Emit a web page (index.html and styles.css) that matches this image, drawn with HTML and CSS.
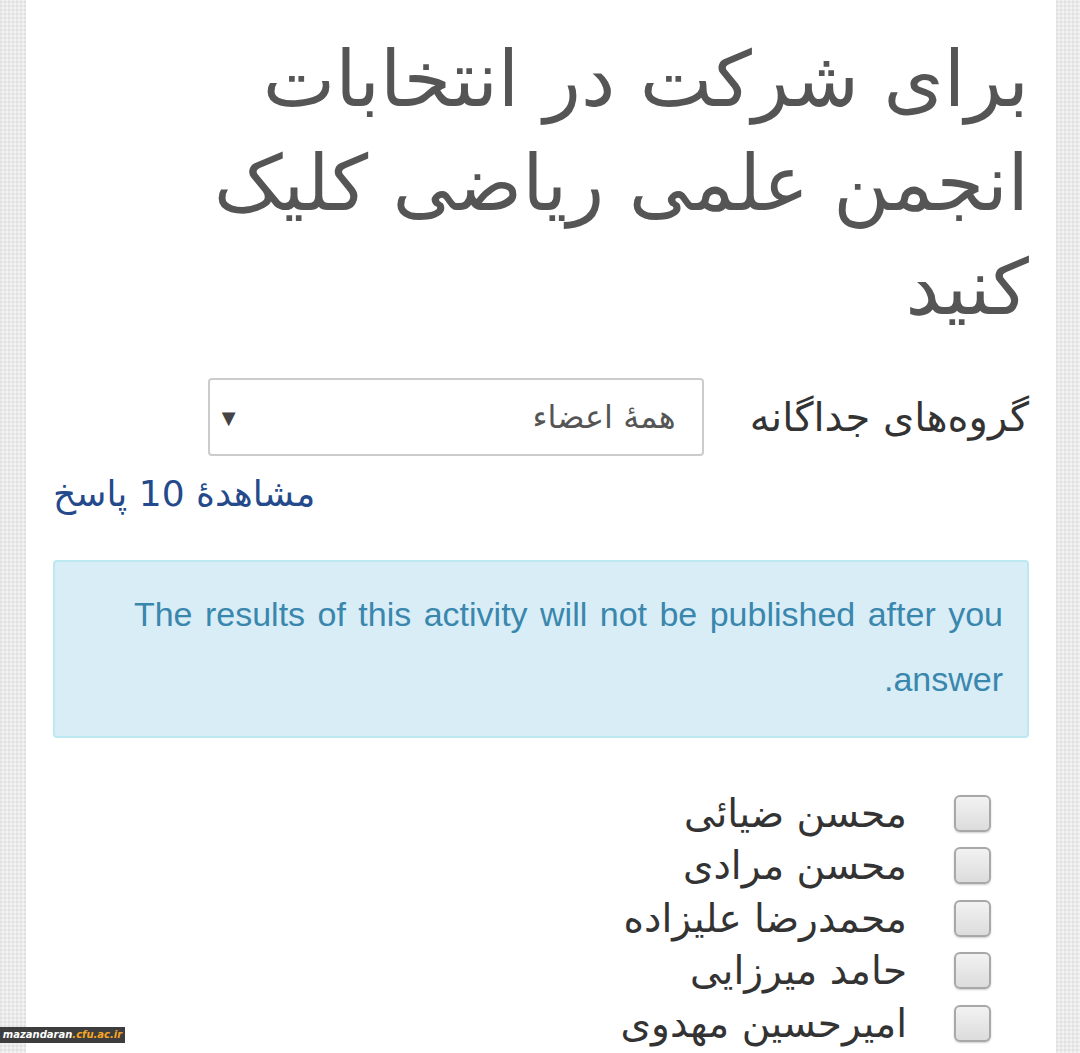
FILE: index.html
```html
<!DOCTYPE html>
<html lang="fa" dir="rtl">
<head>
<meta charset="utf-8">
<title>انتخابات انجمن علمی ریاضی</title>
<link rel="stylesheet" href="styles.css">
</head>
<body>
<div class="page">
  <h1 class="title">برای شرکت در انتخابات انجمن علمی ریاضی کلیک کنید</h1>
  <div class="group-row">
    <label class="group-label">گروه‌های جداگانه</label>
    <div class="select"><span class="select-text">همهٔ اعضاء</span><span class="select-arrow">▼</span></div>
  </div>
  <div class="link-row"><a class="responses" href="#">مشاهدهٔ 10 پاسخ</a></div>
  <div class="alert"><p>The results of this activity will not be published after you answer.</p></div>
  <ul class="options">
    <li><span class="box"></span><span class="name">محسن ضیائی</span></li>
    <li><span class="box"></span><span class="name">محسن مرادی</span></li>
    <li><span class="box"></span><span class="name">محمدرضا علیزاده</span></li>
    <li><span class="box"></span><span class="name">حامد میرزایی</span></li>
    <li><span class="box"></span><span class="name">امیرحسین مهدوی</span></li>
  </ul>
</div>
<div class="watermark">mazandaran<span class="wm-o">.cfu.ac.ir</span></div>
</body>
</html>
```
FILE: styles.css
```css
html, body {
  margin: 0;
  padding: 0;
  height: 100%;
}
body {
  background-color: #ececec;
  background-image:
    repeating-linear-gradient(0deg, rgba(255,255,255,0.35) 0 2px, transparent 2px 4px),
    repeating-linear-gradient(90deg, rgba(200,200,200,0.35) 0 2px, transparent 2px 4px);
  font-family: "DejaVu Sans", "Noto Sans", sans-serif;
  overflow: hidden;
}
.page {
  background: #ffffff;
  margin: 0 24px 0 26px;
  padding: 28px 27px 0 27px;
  min-height: 1053px;
  box-sizing: border-box;
}
.title {
  margin: 0;
  font-weight: normal;
  font-size: 77px;
  line-height: 104px;
  color: #555555;
  padding-left: 150px;
}
.group-row {
  display: flex;
  align-items: center;
  gap: 46px;
  margin-top: 38px;
}
.group-label {
  font-size: 40px;
  color: #333;
}
.select {
  width: 496px;
  height: 78px;
  box-sizing: border-box;
  border: 2px solid #cccccc;
  border-radius: 4px;
  display: flex;
  align-items: center;
  justify-content: space-between;
  padding: 0 26px 0 12px;
  color: #555;
}
.select-text { font-size: 32px; }
.select-arrow { font-size: 18px; color: #444; direction: ltr; }
.link-row {
  margin-top: 13px;
  line-height: 50px;
  text-align: left;
}
.responses {
  font-size: 36px;
  color: #244a8c;
  text-decoration: none;
}
.alert {
  margin-top: 34px;
  background: #d9edf7;
  border: 2px solid #bce8f1;
  border-radius: 4px;
  padding: 20px 24px 24px 24px;
  color: #3a87ad;
}
.alert p {
  margin: 0;
  font-family: "Liberation Sans", Arial, sans-serif;
  font-size: 34px;
  line-height: 65px;
  word-spacing: 3px;
}
.options {
  list-style: none;
  margin: 49px 0 0 0;
  padding: 0 38px 0 0;
}
.options li {
  display: flex;
  align-items: center;
  gap: 47px;
  height: 52.5px;
}
.box {
  width: 33px;
  height: 33px;
  border: 2px solid #a8a8a8;
  border-radius: 6px;
  background: linear-gradient(#f2f2f2, #dcdcdc);
  box-shadow: 0 1px 2px rgba(0,0,0,0.2);
  flex: none;
}
.name {
  font-size: 39px;
  color: #333;
}
.watermark {
  position: fixed;
  left: 0;
  top: 1027px;
  width: 125px;
  height: 16px;
  background: #3d3d3d;
  color: #fff;
  font-family: "DejaVu Sans", sans-serif;
  font-weight: bold;
  font-style: italic;
  font-size: 10px;
  line-height: 16px;
  direction: ltr;
  text-align: center;
}
.wm-o { color: #f5a623; }
```
